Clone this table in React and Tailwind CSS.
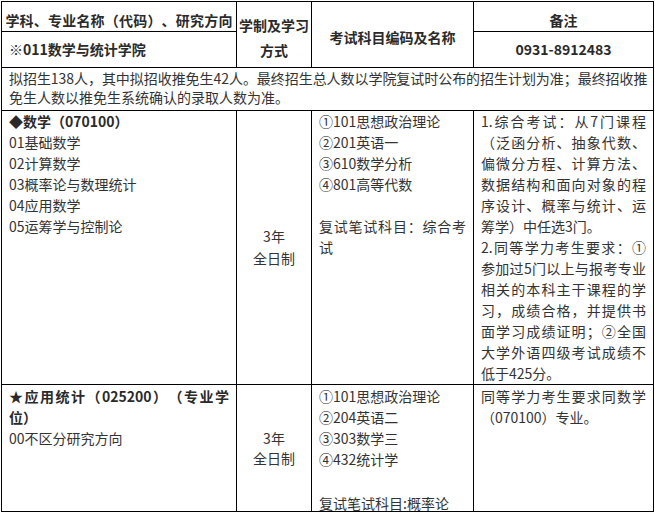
const JL = "whitespace-nowrap text-justify [text-align-last:justify]";
const L = "whitespace-nowrap";
const cell = "border-r border-b border-black";

export default function App() {
  return (
    <div className="ml-px mt-px w-[653px] grid grid-cols-[235px_75px_162px_180px] grid-rows-[30px_36px_43px_274px_127px] border-l border-t border-black bg-white font-['Noto_Sans_CJK_SC',sans-serif] text-[14px] leading-[21px] text-[#333] [text-spacing-trim:space-all]">
      {/* header */}
      <div className={`${cell} col-start-1 row-start-1 flex items-center justify-center pt-[7px] font-bold text-[#2a2a2a] whitespace-nowrap tracking-[0.2px]`}>
        学科、专业名称（代码）、研究方向
      </div>
      <div className={`${cell} col-start-1 row-start-2 flex items-center pl-[7px] font-bold text-[#2a2a2a]`}>
        ※011数学与统计学院
      </div>
      <div className={`${cell} col-start-2 row-start-1 row-span-2 flex flex-col items-center justify-center pt-[6px] leading-[25px] font-bold text-[#2a2a2a]`}>
        <span>学制及学习</span>
        <span>方式</span>
      </div>
      <div className={`${cell} col-start-3 row-start-1 row-span-2 flex items-center justify-center pt-[5px] font-bold text-[#2a2a2a]`}>
        考试科目编码及名称
      </div>
      <div className={`${cell} col-start-4 row-start-1 flex items-center justify-center pt-[7px] font-bold text-[#2a2a2a]`}>
        备注
      </div>
      <div className={`${cell} col-start-4 row-start-2 flex items-center justify-center font-bold text-[#2a2a2a]`}>
        0931-8912483
      </div>

      {/* notice */}
      <div className={`${cell} col-start-1 col-span-4 row-start-3 px-[7px] pt-[1px] leading-[19px]`}>
        <div className={`${JL} tracking-[-0.05px]`}>拟招生138人，其中拟招收推免生42人。最终招生总人数以学院复试时公布的招生计划为准；最终招收推</div>
        <div className={L}>免生人数以推免生系统确认的录取人数为准。</div>
      </div>

      {/* math row */}
      <div className={`${cell} col-start-1 row-start-4 px-[7px]`}>
        <div className={`${L} font-bold text-[#2a2a2a]`}>◆数学（070100）</div>
        <div className={L}>01基础数学</div>
        <div className={L}>02计算数学</div>
        <div className={L}>03概率论与数理统计</div>
        <div className={L}>04应用数学</div>
        <div className={L}>05运筹学与控制论</div>
      </div>
      <div className={`${cell} col-start-2 row-start-4 flex flex-col items-center justify-center leading-[21.5px]`}>
        <span>3年</span>
        <span>全日制</span>
      </div>
      <div className={`${cell} col-start-3 row-start-4 px-[7px]`}>
        <div className={L}>①101思想政治理论</div>
        <div className={L}>②201英语一</div>
        <div className={L}>③610数学分析</div>
        <div className={L}>④801高等代数</div>
        <div className="h-[21px]" />
        <div className={JL}>复试笔试科目：综合考</div>
        <div className={L}>试</div>
      </div>
      <div className={`${cell} col-start-4 row-start-4 px-[7px]`}>
        <div className={JL}>1.综合考试：从7门课程</div>
        <div className={JL}>（泛函分析、抽象代数、</div>
        <div className={JL}>偏微分方程、计算方法、</div>
        <div className={JL}>数据结构和面向对象的程</div>
        <div className={JL}>序设计、概率与统计、运</div>
        <div className={L}>筹学）中任选3门。</div>
        <div className={JL}>2.同等学力考生要求：①</div>
        <div className={JL}>参加过5门以上与报考专业</div>
        <div className={JL}>相关的本科主干课程的学</div>
        <div className={JL}>习，成绩合格，并提供书</div>
        <div className={JL}>面学习成绩证明；②全国</div>
        <div className={JL}>大学外语四级考试成绩不</div>
        <div className={L}>低于425分。</div>
      </div>

      {/* statistics row */}
      <div className={`${cell} col-start-1 row-start-5 px-[7px] pt-px`}>
        <div className={`${JL} font-bold text-[#2a2a2a]`}>★应用统计（025200）（专业学</div>
        <div className={`${L} font-bold text-[#2a2a2a]`}>位）</div>
        <div className={L}>00不区分研究方向</div>
      </div>
      <div className={`${cell} col-start-2 row-start-5 flex flex-col items-center justify-center leading-[20px]`}>
        <span>3年</span>
        <span>全日制</span>
      </div>
      <div className={`${cell} col-start-3 row-start-5 px-[7px] pt-px`}>
        <div className={L}>①101思想政治理论</div>
        <div className={L}>②204英语二</div>
        <div className={L}>③303数学三</div>
        <div className={L}>④432统计学</div>
        <div className="h-[23px]" />
        <div className={L}>复试笔试科目:概率论</div>
      </div>
      <div className={`${cell} col-start-4 row-start-5 px-[7px] pt-px`}>
        <div className={JL}>同等学力考生要求同数学</div>
        <div className={L}>（070100）专业。</div>
      </div>
    </div>
  );
}
